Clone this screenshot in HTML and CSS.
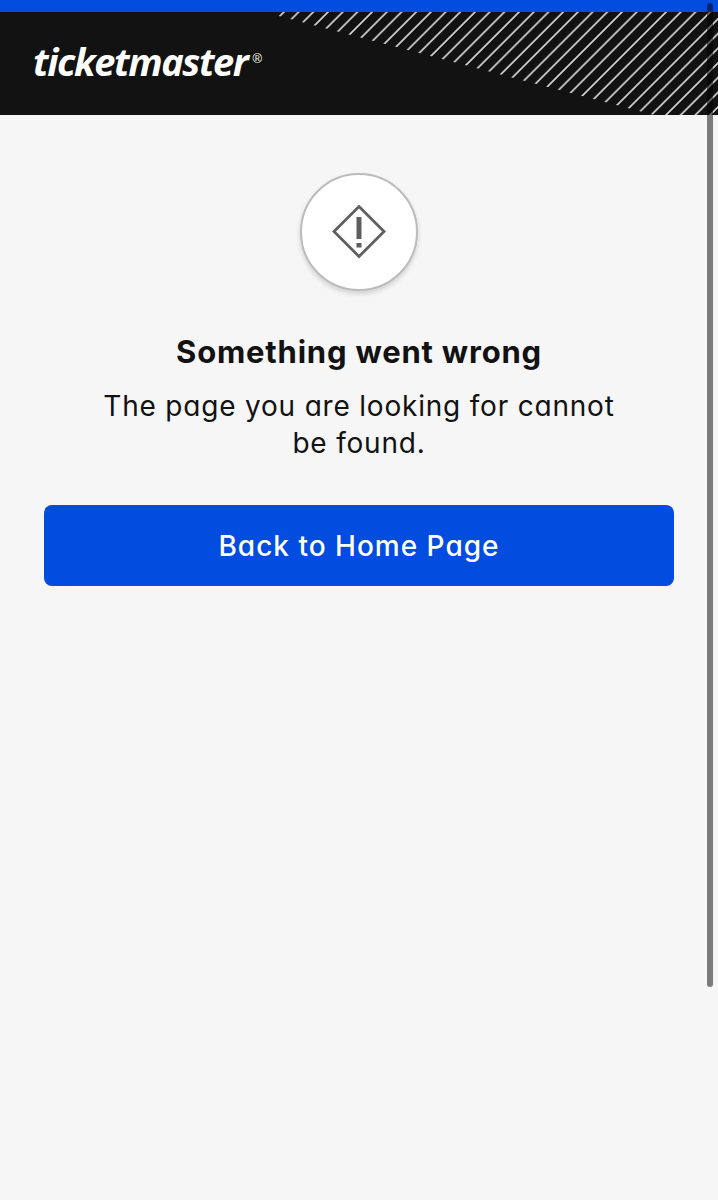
FILE: index.html
```
<!DOCTYPE html>
<html lang="en">
  <head>
    <meta charset="utf-8" />
    <title>Ticketmaster</title>
    <link rel="stylesheet" href="styles.css">
  </head>

  <body>
    <header class="header">
      <svg class="stripes" width="718" height="103" viewBox="0 0 718 103">
        <defs>
          <pattern id="lines" x="276.5" width="14.7" height="103" patternUnits="userSpaceOnUse" patternTransform="skewX(-45)">
            <rect x="6.2" width="2.4" height="103" fill="#d2d2d2" />
          </pattern>
        </defs>
        <path d="M275 0V3L654 103H718V0Z" fill="url(#lines)" />
      </svg>
      <a class="logo" href="#">ticketmaster<span class="registered">®</span></a>
    </header>

    <main class="error">
      <div class="error-icon">
        <svg width="54" height="54" viewBox="0 0 54 54">
          <path d="M27 1.5L52 26.5L27 51.5L2 26.5Z" fill="none" stroke="#5f5f5f" stroke-width="2.8" />
          <path d="M24.5 12h5v22h-5zM24.5 38h5v4.5h-5z" fill="#5f5f5f" />
        </svg>
      </div>
      <h1 class="error-title">Something went wrong</h1>
      <p class="error-text">The page you are looking for cannot<br>be found.</p>
      <a class="button" href="#">Back to Home Page</a>
    </main>

    <div class="scrollbar"></div>
  </body>
</html>
```
FILE: styles.css
```
html,
body {
  margin: 0;
  height: 100%;
}

body {
  background: #f6f6f6;
  color: #121212;
  font-family: Inter, "Liberation Sans", sans-serif;
  font-feature-settings: "cv11";
  overflow: hidden;
}
a {
  text-decoration: none;
}

.header {
  position: relative;
  box-sizing: border-box;
  height: 115px;
  border-top: 12px solid #024ddf;
  background: #121212;
  padding: 21px 33px 0;
}
.stripes {
  position: absolute;
  top: 0;
  left: 0;
}
.logo {
  position: relative;
  display: flex;
  color: #fff;
  font: italic 700 38px/56px "Open Sans", "Noto Sans", sans-serif;
  letter-spacing: -1.4px;
}
.registered {
  margin-left: 5px;
  font: 400 13px/52px "Liberation Sans", sans-serif;
  letter-spacing: 0;
}

.error {
  display: flex;
  flex-direction: column;
  align-items: center;
  padding: 58px 44px 0;
  text-align: center;
}
.error-icon {
  box-sizing: border-box;
  width: 118px;
  height: 118px;
  display: flex;
  align-items: center;
  justify-content: center;
  background: #fff;
  border: 2px solid #bcbcbc;
  border-radius: 50%;
  box-shadow: 0 3px 5px rgba(0, 0, 0, 0.15);
}
.error-title {
  margin: 41px 0 0;
  font-size: 31px;
  font-weight: 700;
  line-height: 40px;
  letter-spacing: 0.8px;
}
.error-text {
  margin: 16px 0 0;
  font-size: 28px;
  line-height: 37px;
  letter-spacing: 0.8px;
}
.button {
  align-self: stretch;
  margin-top: 43px;
  border-radius: 8px;
  background: #024ddf;
  color: #fff;
  font-size: 28px;
  font-weight: 500;
  line-height: 82px;
  height: 81px;
  letter-spacing: 1px;
}

.scrollbar {
  position: absolute;
  top: 3px;
  right: 5px;
  width: 6px;
  height: 984px;
  border-radius: 3px;
  background: rgba(0, 0, 0, 0.5);
}
```
